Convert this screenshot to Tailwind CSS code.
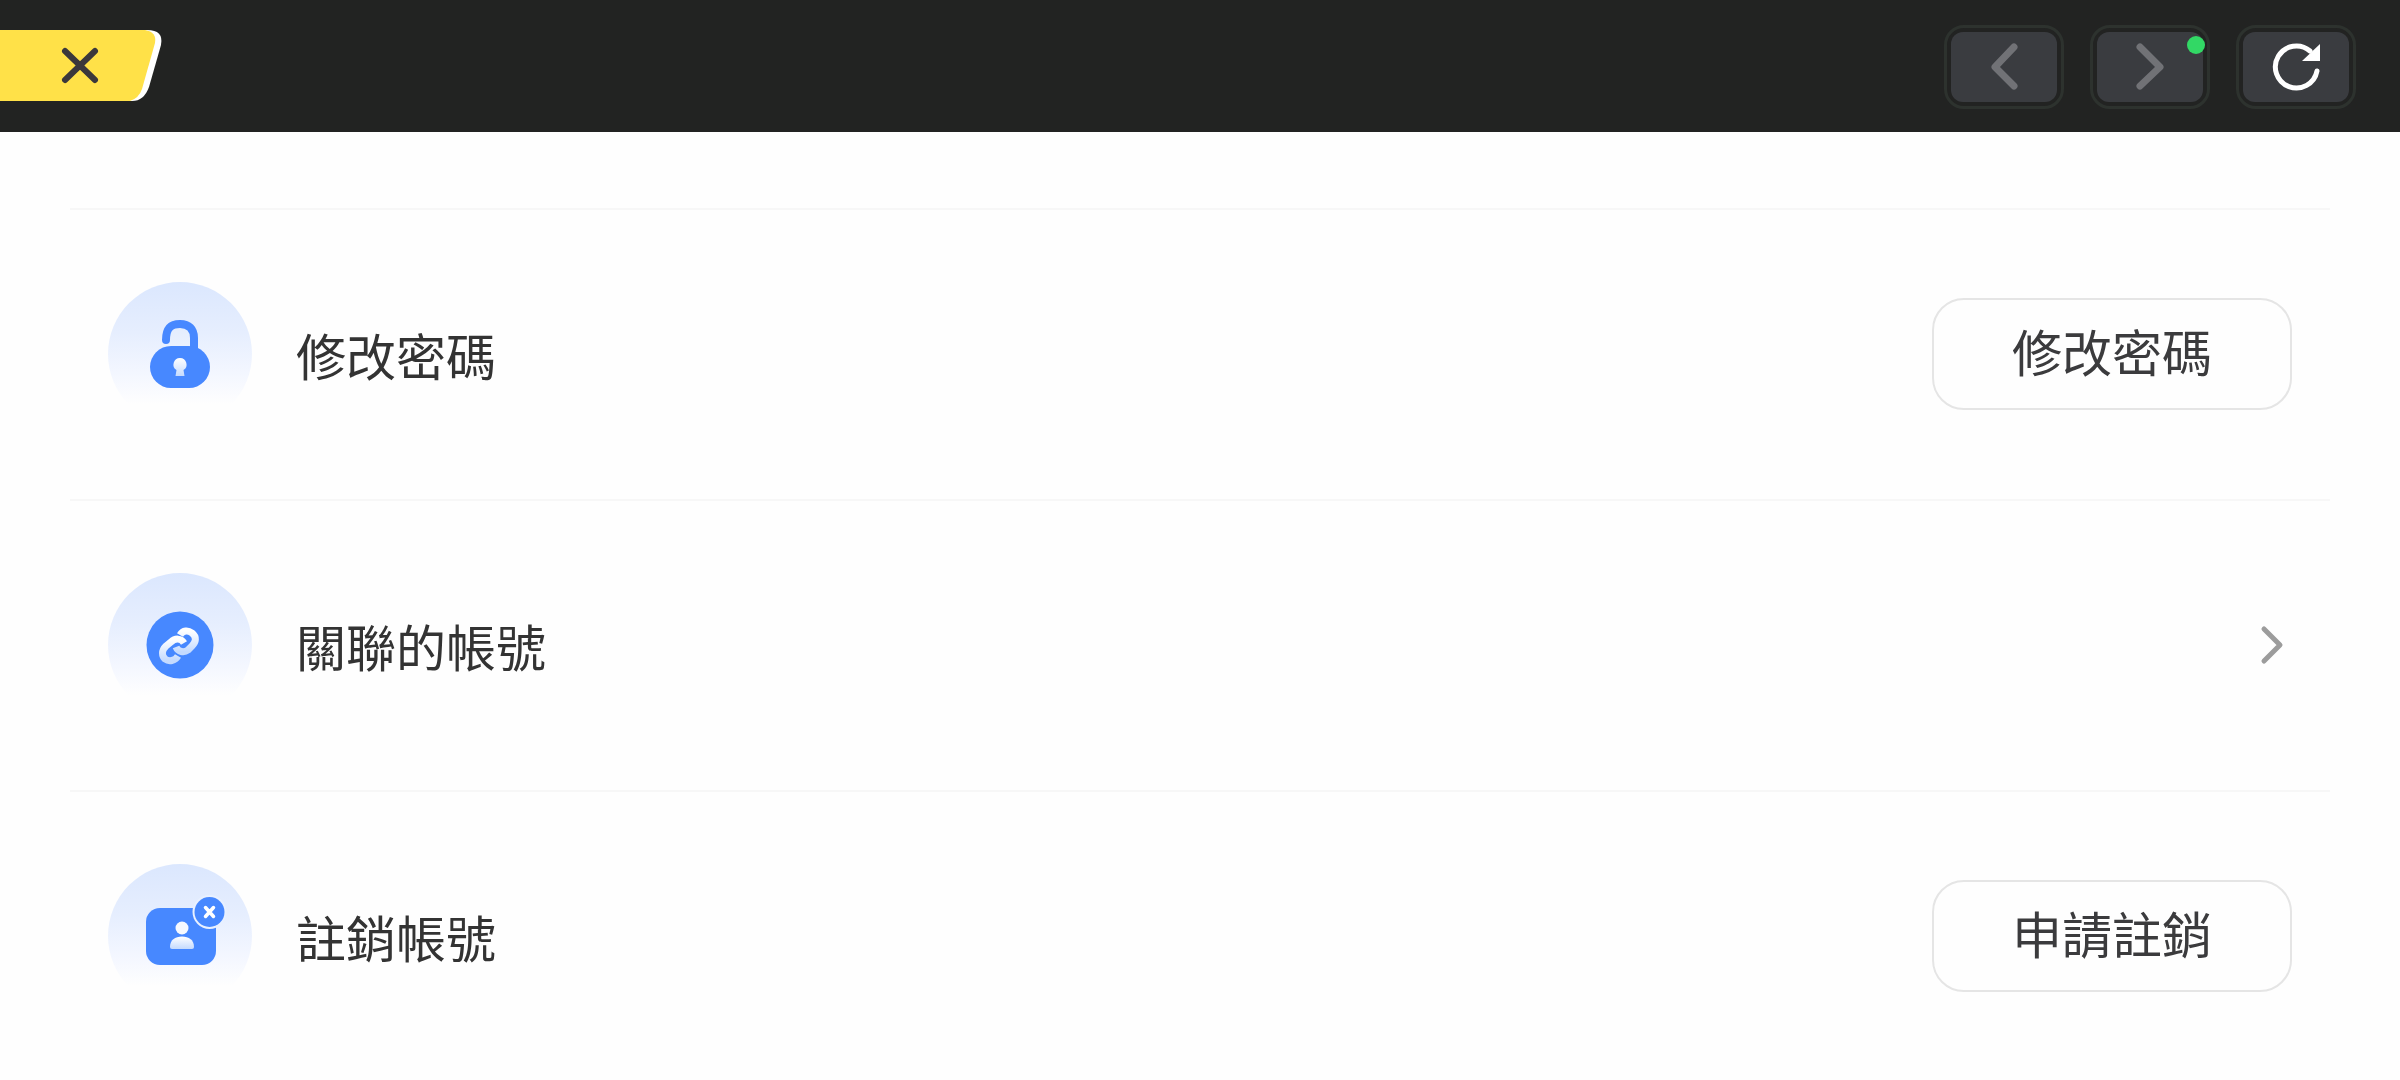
<!DOCTYPE html>
<html lang="zh-Hant">
<head>
    <meta charset="UTF-8">
    <meta name="viewport" content="width=device-width, initial-scale=1.0">
    <title>帳號設定</title>
    <script src="https://cdn.jsdelivr.net/npm/@tailwindcss/browser@4"></script>
</head>
<body class="bg-[#fefefe] min-h-screen font-['Noto_Sans_CJK_TC','Noto_Sans_CJK_SC',sans-serif]">
    <!-- Shared gradients -->
    <svg class="absolute w-0 h-0" aria-hidden="true">
        <defs>
            <linearGradient id="halo" x1="0" y1="0" x2="0" y2="1">
                <stop offset="0" stop-color="#dbe7fe"/>
                <stop offset="0.35" stop-color="#e6eefe"/>
                <stop offset="0.65" stop-color="#f4f7ff"/>
                <stop offset="0.85" stop-color="#fefefe"/>
            </linearGradient>
            <linearGradient id="shine" x1="0" y1="0" x2="0" y2="1">
                <stop offset="0" stop-color="#ffffff"/>
                <stop offset="1" stop-color="#c4dafe"/>
            </linearGradient>
        </defs>
    </svg>

    <header class="flex items-center justify-between h-33 pr-11 bg-[#222322]">
        <button type="button" aria-label="關閉">
            <svg class="block w-[164px] h-[74px]" viewBox="0 0 164 74" fill="none">
                <path d="M0 1H147Q164 1 161 16L149 58Q144 72 132 72H0Z" fill="#ffffff"/>
                <path d="M0 1H145Q157 3 155 14L142 60Q139 69 130 72H0Z" fill="#ffe148"/>
                <path d="M65 22L95 51M95 22L65 51" stroke="#3b383b" stroke-width="6" stroke-linecap="round"/>
            </svg>
        </button>

        <nav class="flex gap-[26px] pt-0.5">
            <button type="button" aria-label="上一頁" class="w-30 h-21 p-1 rounded-[20px] border-[3px] border-[#2d322e]">
                <span class="flex items-center justify-center h-full rounded-xl bg-[#3a3c40]">
                    <svg class="w-8 h-12" viewBox="0 0 32 48" fill="none">
                        <path d="M26 4L7 24L26 43" stroke="#717276" stroke-width="7" stroke-linecap="round" stroke-linejoin="round"/>
                    </svg>
                </span>
            </button>
            <button type="button" aria-label="下一頁" class="relative w-30 h-21 p-1 rounded-[20px] border-[3px] border-[#2d322e]">
                <span class="flex items-center justify-center h-full rounded-xl bg-[#3a3c40]">
                    <svg class="w-8 h-12" viewBox="0 0 32 48" fill="none">
                        <path d="M6 4L26 24L6 43" stroke="#717276" stroke-width="7" stroke-linecap="round" stroke-linejoin="round"/>
                    </svg>
                </span>
                <span class="absolute top-2 right-0.5 size-[18px] rounded-full bg-[#32d865]"></span>
            </button>
            <button type="button" aria-label="重新整理" class="w-30 h-21 p-1 rounded-[20px] border-[3px] border-[#2d322e]">
                <span class="flex items-center justify-center h-full rounded-xl bg-[#3a3c40]">
                    <svg class="size-12" viewBox="0 0 48 48" fill="none">
                        <path d="M45 28A21 21 0 1 1 38 8" stroke="#ffffff" stroke-width="5" stroke-linecap="round"/>
                        <path d="M48 1V18H30Z" fill="#ffffff"/>
                    </svg>
                </span>
            </button>
        </nav>
    </header>

    <main class="px-[70px] pt-19">
        <ul>
            <li class="flex items-center h-[291px] pl-[38px] pr-[38px] pb-0.5 border-t-2 border-[#f7f7f7]">
                <svg class="size-36 shrink-0" viewBox="0 0 144 144" fill="none">
                    <circle cx="72" cy="72" r="72" fill="url(#halo)"/>
                    <path d="M58 58C58 46 63 42 72 42C81 42 86 47 86 56V68" stroke="#4788ff" stroke-width="8" stroke-linecap="round"/>
                    <rect x="42" y="64" width="60" height="42" rx="21" fill="#4788ff"/>
                    <path d="M72 76a6.500 6.500 0 0 1 3.500 12L76.500 94H67.500L68.500 88A6.500 6.500 0 0 1 72 76Z" fill="url(#shine)"/>
                </svg>
                <p class="ml-11 text-[50px] leading-[72px] text-[#333333]">修改密碼</p>
                <button type="button" class="ml-auto h-28 px-[78px] pb-2 rounded-[32px] border-2 border-[#e5e5e5] text-[50px] leading-[72px] text-[#3b3b3d]">修改密碼</button>
            </li>
            <li class="border-t-2 border-[#f7f7f7]">
                <a href="#" class="flex items-center h-[289px] pl-[38px] pr-[38px] pb-0.5">
                    <svg class="size-36 shrink-0" viewBox="0 0 144 144" fill="none">
                        <circle cx="72" cy="72" r="72" fill="url(#halo)"/>
                        <circle cx="72" cy="72" r="33.500" fill="#4788ff"/>
                        <g stroke="url(#shine)" stroke-width="7" stroke-linecap="butt">
                            <path d="M72 62C75 57 80 57 84 60C89 64 88 69 84 73L80 77C76 80 70 79 68 74"/>
                            <path d="M76 70C73 65 67 65 63 69L58 73C53 78 54 83 57 86C61 89 67 88 70 83"/>
                        </g>
                    </svg>
                    <span class="ml-11 text-[50px] leading-[72px] text-[#333333]">關聯的帳號</span>
                    <svg class="ml-auto mr-1.5 w-8 h-10" viewBox="0 0 32 40" fill="none">
                        <path d="M10 4L26 20L10 36" stroke="#9c9c9c" stroke-width="5" stroke-linecap="round" stroke-linejoin="round"/>
                    </svg>
                </a>
            </li>
            <li class="flex items-center h-[291px] pl-[38px] pr-[38px] pb-0.5 border-t-2 border-[#f7f7f7]">
                <svg class="size-36 shrink-0" viewBox="0 0 144 144" fill="none">
                    <circle cx="72" cy="72" r="72" fill="url(#halo)"/>
                    <rect x="38" y="44" width="70" height="57" rx="14" fill="#4788ff"/>
                    <circle cx="101.500" cy="48" r="17" fill="#e9f1ff"/>
                    <circle cx="101.500" cy="48" r="15" fill="#4788ff"/>
                    <path d="M97.500 43.500L105.500 52.500M105.500 43.500L97.500 52.500" stroke="#ffffff" stroke-width="3.500" stroke-linecap="round"/>
                    <circle cx="74" cy="64" r="6.500" fill="#f6f9ff"/>
                    <path d="M62 83C62 76 67 72.500 74 72.500S86 76 86 83Q86 85 84 85H64Q62 85 62 83Z" fill="url(#shine)"/>
                </svg>
                <p class="ml-11 text-[50px] leading-[72px] text-[#333333]">註銷帳號</p>
                <button type="button" class="ml-auto h-28 px-[78px] pb-2 rounded-[32px] border-2 border-[#e5e5e5] text-[50px] leading-[72px] text-[#3b3b3d]">申請註銷</button>
            </li>
        </ul>
    </main>
</body>
</html>
